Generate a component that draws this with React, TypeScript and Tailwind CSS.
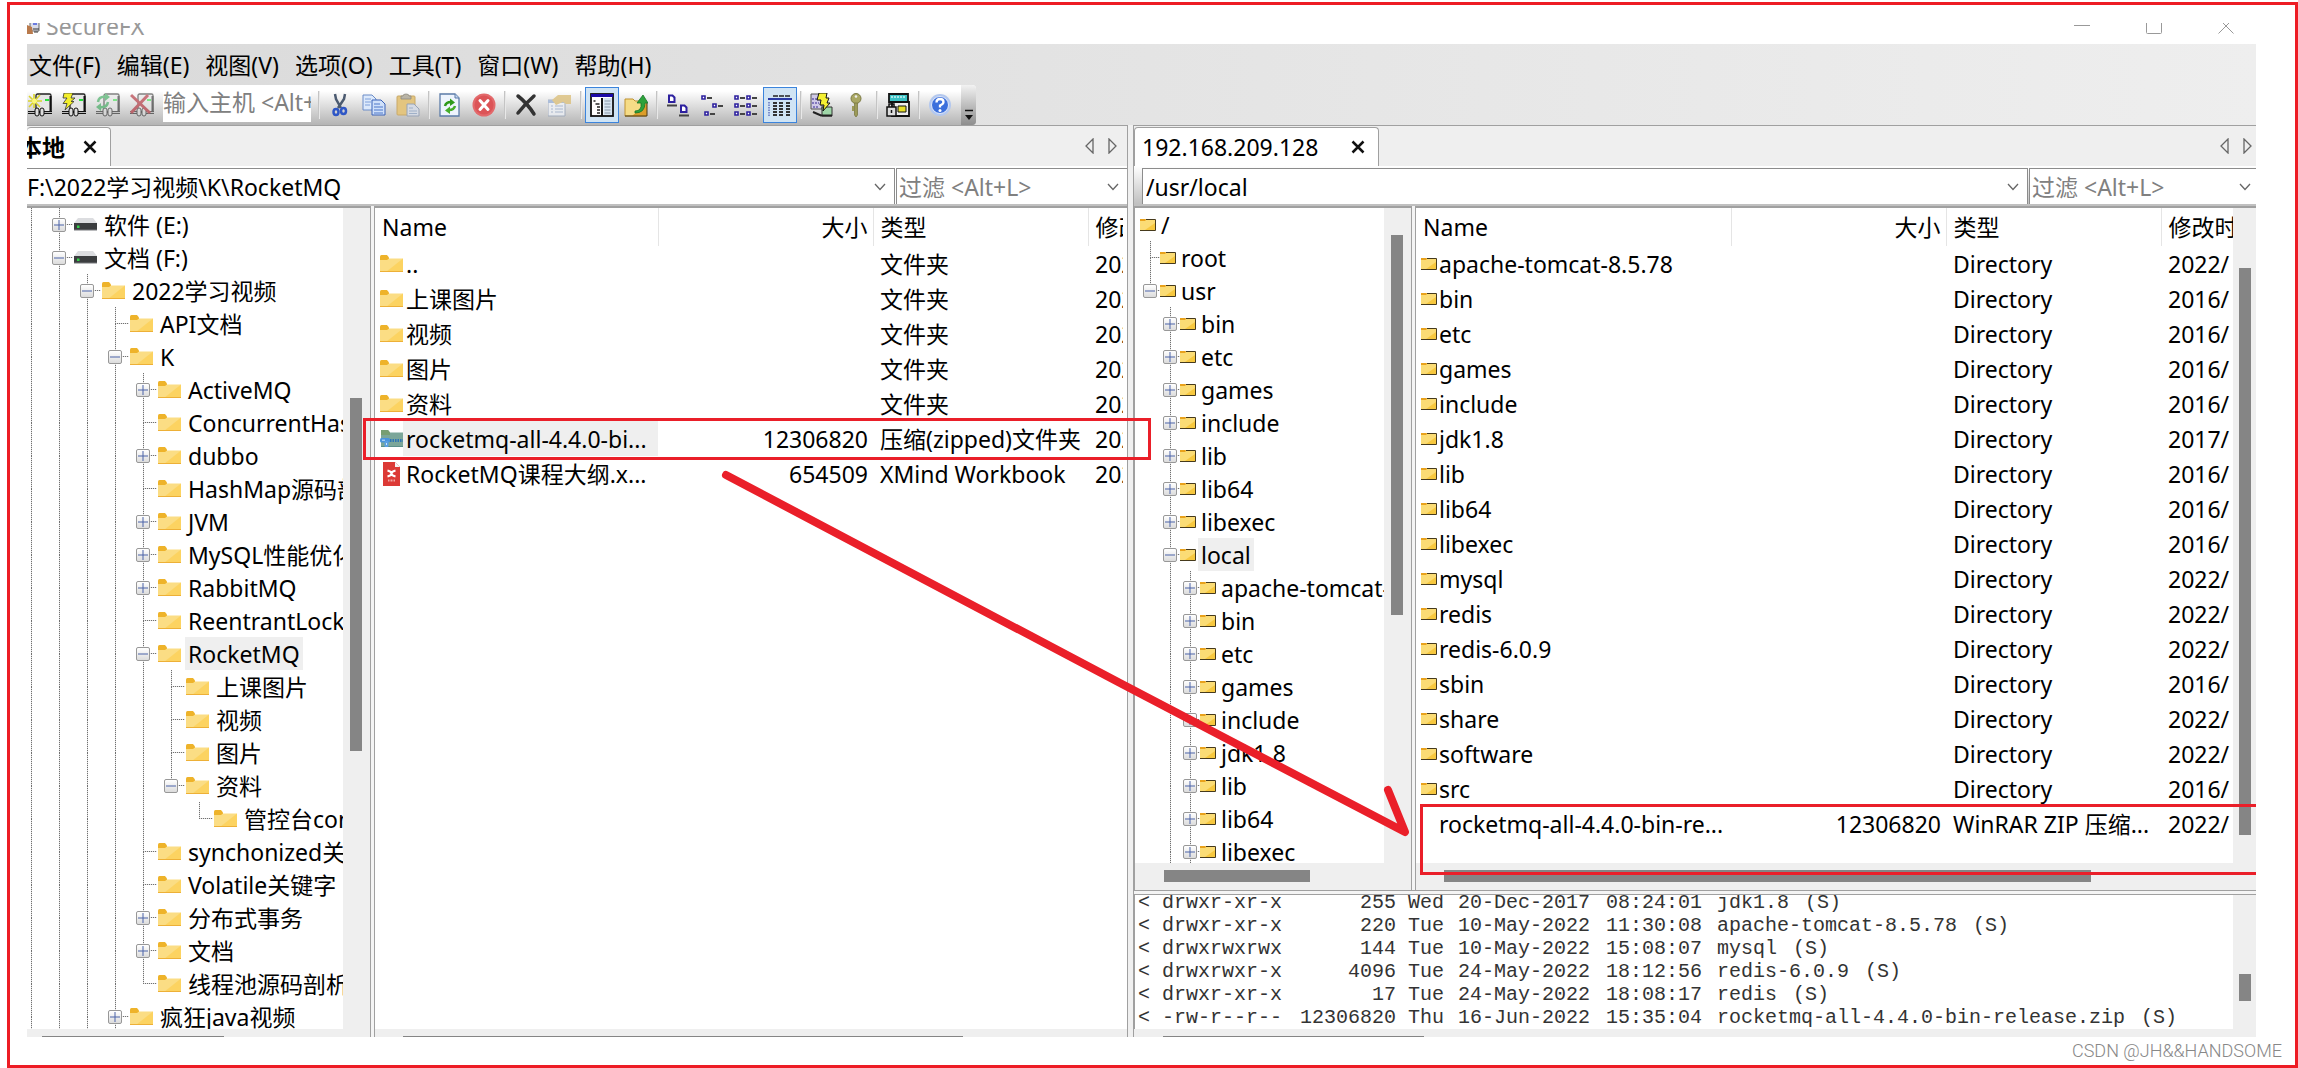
import type { ReactNode } from 'react';
import clsx from 'clsx';

type NodeKind = 'drive' | 'folder' | 'remote';

interface TreeRow {
  label: string;
  // one character per indent level: '|' guide, ' ' blank,
  // '+' closed, '-' open, 't' tee, 'l' last leaf, 'c' open and last
  guides: string;
  kind: NodeKind;
  selected?: boolean;
}

interface FileRow {
  name: string;
  size?: string;
  type: string;
  date: string;
  icon?: ReactNode;
  selected?: boolean;
}

const MENUS = ['文件(F)', '编辑(E)', '视图(V)', '选项(O)', '工具(T)', '窗口(W)', '帮助(H)'];

const LOCAL_TREE: TreeRow[] = [
  { label: '软件 (E:)', guides: '|+', kind: 'drive' },
  { label: '文档 (F:)', guides: '|-', kind: 'drive' },
  { label: '2022学习视频', guides: '||-', kind: 'folder' },
  { label: 'API文档', guides: '|||t', kind: 'folder' },
  { label: 'K', guides: '|||-', kind: 'folder' },
  { label: 'ActiveMQ', guides: '||||+', kind: 'folder' },
  { label: 'ConcurrentHashMap', guides: '||||t', kind: 'folder' },
  { label: 'dubbo', guides: '||||+', kind: 'folder' },
  { label: 'HashMap源码剖析', guides: '||||t', kind: 'folder' },
  { label: 'JVM', guides: '||||+', kind: 'folder' },
  { label: 'MySQL性能优化', guides: '||||+', kind: 'folder' },
  { label: 'RabbitMQ', guides: '||||+', kind: 'folder' },
  { label: 'ReentrantLock', guides: '||||t', kind: 'folder' },
  { label: 'RocketMQ', guides: '||||-', kind: 'folder', selected: true },
  { label: '上课图片', guides: '|||||t', kind: 'folder' },
  { label: '视频', guides: '|||||t', kind: 'folder' },
  { label: '图片', guides: '|||||t', kind: 'folder' },
  { label: '资料', guides: '|||||c', kind: 'folder' },
  { label: '管控台console', guides: '||||| l', kind: 'folder' },
  { label: 'synchonized关键字', guides: '||||t', kind: 'folder' },
  { label: 'Volatile关键字', guides: '||||t', kind: 'folder' },
  { label: '分布式事务', guides: '||||+', kind: 'folder' },
  { label: '文档', guides: '||||+', kind: 'folder' },
  { label: '线程池源码剖析', guides: '||||l', kind: 'folder' },
  { label: '疯狂java视频', guides: '|||+', kind: 'folder' },
];

const REMOTE_TREE: TreeRow[] = [
  { label: '/', guides: '', kind: 'remote' },
  { label: 'root', guides: 't', kind: 'remote' },
  { label: 'usr', guides: 'c', kind: 'remote' },
  { label: 'bin', guides: ' +', kind: 'remote' },
  { label: 'etc', guides: ' +', kind: 'remote' },
  { label: 'games', guides: ' +', kind: 'remote' },
  { label: 'include', guides: ' +', kind: 'remote' },
  { label: 'lib', guides: ' +', kind: 'remote' },
  { label: 'lib64', guides: ' +', kind: 'remote' },
  { label: 'libexec', guides: ' +', kind: 'remote' },
  { label: 'local', guides: ' -', kind: 'remote', selected: true },
  { label: 'apache-tomcat-8.5.78', guides: ' |+', kind: 'remote' },
  { label: 'bin', guides: ' |+', kind: 'remote' },
  { label: 'etc', guides: ' |+', kind: 'remote' },
  { label: 'games', guides: ' |+', kind: 'remote' },
  { label: 'include', guides: ' |+', kind: 'remote' },
  { label: 'jdk1.8', guides: ' |+', kind: 'remote' },
  { label: 'lib', guides: ' |+', kind: 'remote' },
  { label: 'lib64', guides: ' |+', kind: 'remote' },
  { label: 'libexec', guides: ' |+', kind: 'remote' },
];

const LOCAL_FILES: FileRow[] = [
  { name: '..', type: '文件夹', date: '2022/6/16' },
  { name: '上课图片', type: '文件夹', date: '2022/6/16' },
  { name: '视频', type: '文件夹', date: '2022/6/16' },
  { name: '图片', type: '文件夹', date: '2022/6/16' },
  { name: '资料', type: '文件夹', date: '2022/6/16' },
  {
    name: 'rocketmq-all-4.4.0-bi...',
    size: '12306820',
    type: '压缩(zipped)文件夹',
    date: '2022/6/16',
    icon: <ZipIcon />,
    selected: true,
  },
  { name: 'RocketMQ课程大纲.x...', size: '654509', type: 'XMind Workbook', date: '2022/6/16', icon: <XmindIcon /> },
];

const REMOTE_FILES: FileRow[] = [
  { name: 'apache-tomcat-8.5.78', type: 'Directory', date: '2022/' },
  { name: 'bin', type: 'Directory', date: '2016/' },
  { name: 'etc', type: 'Directory', date: '2016/' },
  { name: 'games', type: 'Directory', date: '2016/' },
  { name: 'include', type: 'Directory', date: '2016/' },
  { name: 'jdk1.8', type: 'Directory', date: '2017/' },
  { name: 'lib', type: 'Directory', date: '2016/' },
  { name: 'lib64', type: 'Directory', date: '2016/' },
  { name: 'libexec', type: 'Directory', date: '2016/' },
  { name: 'mysql', type: 'Directory', date: '2022/' },
  { name: 'redis', type: 'Directory', date: '2022/' },
  { name: 'redis-6.0.9', type: 'Directory', date: '2022/' },
  { name: 'sbin', type: 'Directory', date: '2016/' },
  { name: 'share', type: 'Directory', date: '2022/' },
  { name: 'software', type: 'Directory', date: '2022/' },
  { name: 'src', type: 'Directory', date: '2016/' },
  { name: 'rocketmq-all-4.4.0-bin-re...', size: '12306820', type: 'WinRAR ZIP 压缩...', date: '2022/', icon: <span className="w-4" /> },
];

const LOG = [
  ['drwxr-xr-x', '255', 'Wed', '20-Dec-2017', '08:24:01', 'jdk1.8', '(S)'],
  ['drwxr-xr-x', '220', 'Tue', '10-May-2022', '11:30:08', 'apache-tomcat-8.5.78', '(S)'],
  ['drwxrwxrwx', '144', 'Tue', '10-May-2022', '15:08:07', 'mysql', '(S)'],
  ['drwxrwxr-x', '4096', 'Tue', '24-May-2022', '18:12:56', 'redis-6.0.9', '(S)'],
  ['drwxr-xr-x', '17', 'Tue', '24-May-2022', '18:08:17', 'redis', '(S)'],
  ['-rw-r--r--', '12306820', 'Thu', '16-Jun-2022', '15:35:04', 'rocketmq-all-4.4.0-bin-release.zip', '(S)'],
];

/* ---------- small icons ---------- */

function FolderIcon() {
  return (
    <svg viewBox="0 0 23 18" className="h-[18px] w-[23px] shrink-0">
      <path d="M0 1.5Q0 0 1.5 0H7l2 2.5V6H0z" fill="#eeb32a" />
      <path d="M0 5h7l2-1.5h14V17H0z" fill="#fbdd84" />
      <path d="M23 3.5V17H6z" fill="#fccf52" opacity=".7" />
      <path d="M0 16.5h23" stroke="#edb037" />
    </svg>
  );
}

function RemoteFolderIcon() {
  return (
    <svg viewBox="0 0 16 13" className="h-[13px] w-4 shrink-0">
      <path d="M0 1h5.500l1 1.500V4H0z" fill="#e9a21c" />
      <path d="M0 3h5l1-1h9v10H0z" fill="#fbdc75" />
      <path d="M15 5v7H5z" fill="#f7c83f" />
      <path d="M6 1.500h9.500V12.500H0" fill="none" stroke="#463a1c" />
    </svg>
  );
}

function DriveIcon() {
  return (
    <svg viewBox="0 0 23 13" className="h-[13px] w-[23px] shrink-0">
      <path d="M4 0h15l4 5H0z" fill="#dcdde0" />
      <path d="M0 5h23v7H0z" fill="#3b3d3f" />
      <path d="M0 12h23" stroke="#77797c" />
      <path d="M3 7.500h2.500V10H3z" fill="#35d04a" />
    </svg>
  );
}

function ZipIcon() {
  return (
    <svg viewBox="0 0 23 18" className="h-[18px] w-[23px] shrink-0">
      <path d="M1 0h7l2 2.500h13V17H1z" fill="#7ba699" />
      <path d="M1 0h7l2 2.500V5H1z" fill="#779e73" />
      <path d="M10 10.500h13" stroke="#2f74b5" strokeWidth="3" strokeDasharray="1.500 1" />
      <path d="M1 16.500h22" stroke="#5b8f8a" />
      <rect x="0" y="8" width="10" height="4.500" rx="1.500" fill="#4a94dd" />
      <rect x="4.500" y="11" width="4" height="6" rx="1" fill="#5aa0e4" />
      <path d="M2 10.200h3M6.500 13v2" stroke="#cfe6fb" />
    </svg>
  );
}

function XmindIcon() {
  return (
    <svg viewBox="0 0 23 24" className="h-6 w-[23px] shrink-0">
      <path d="M3 0h12l5 5v19H3z" fill="#dc3a36" />
      <path d="M15 0l5 5h-5z" fill="#f4f4f4" />
      <path d="M7.500 8.500q4 1 4 3t4 3M15.500 8.500q-4 1-4 3t-4 3" fill="none" stroke="#fff" strokeWidth="2" />
      <path d="M8 18.500h7" stroke="#f0a7a4" strokeWidth="2" strokeDasharray="1 .5" />
    </svg>
  );
}

function CloseMark() {
  return (
    <svg viewBox="0 0 14 14" className="size-[14px]">
      <path d="M1.500 1.500l11 11M12.500 1.500l-11 11" stroke="#111" strokeWidth="2.500" />
    </svg>
  );
}

function Chevron() {
  return (
    <svg viewBox="0 0 12 8" className="h-2 w-3">
      <path d="M1 1l5 5.500L11 1" fill="none" stroke="#666" strokeWidth="1.300" />
    </svg>
  );
}

/* ---------- toolbar icons ---------- */

function Server({ children, faded }: { children: ReactNode; faded?: boolean }) {
  return (
    <svg viewBox="0 0 24 24" className={clsx('size-6', faded && 'opacity-55')}>
      <rect x="8" y="1" width="15" height="18" rx="1.500" fill="#e6e6e6" stroke="#222" strokeWidth="1.300" />
      <path d="M22.500 3v16H10" fill="none" stroke="#111" strokeWidth="2" />
      <path d="M17 7h4" stroke="#27e23c" strokeWidth="2" />
      <path d="M0 19.500h7M16 19.500h8" stroke="#111" strokeWidth="3" />
      <path d="M0 19.500h7M16 19.500h8" stroke="#bbb" strokeWidth="1" />
      <rect x="7" y="15" width="4" height="8" rx="2" fill="#ddd" stroke="#111" />
      <rect x="12" y="15" width="4" height="8" rx="2" fill="#ddd" stroke="#111" />
      {children}
    </svg>
  );
}

const NewSessionIcon = () => (
  <Server>
    <path d="M6 1v14M0 8h14M1 3l11 11M12 2L1 14" stroke="#d9d32b" strokeWidth="1.600" />
    <circle cx="6.500" cy="8" r="2.500" fill="#fbf87a" />
  </Server>
);

const QuickConnectIcon = () => (
  <Server>
    <path d="M2 0h9L9 5h4l-4 3.500h3L3 17l2-6.500H1L5 5H1z" fill="#f3ef2c" stroke="#333" strokeWidth=".8" />
  </Server>
);

const ReconnectIcon = () => (
  <Server faded>
    <path d="M2 9q1-6 8-5M12 9q-1 6-8 5" fill="none" stroke="#21a046" strokeWidth="2.500" />
    <path d="M9 0l5 4-5 4zM5 10l-5 4 5 4z" fill="#21a046" />
  </Server>
);

const DisconnectIcon = () => (
  <Server faded>
    <path d="M1 2l19 18M18 2L1 20" stroke="#a8101c" strokeWidth="3" />
  </Server>
);

const CutIcon = () => (
  <svg viewBox="0 0 24 24" className="size-6">
    <path d="M7 1l1 5 5 9M17 1l-1 5-6 9" fill="none" stroke="#4b5a70" strokeWidth="2.500" />
    <ellipse cx="8" cy="19" rx="2.500" ry="3" fill="none" stroke="#2f57c6" strokeWidth="2.500" />
    <ellipse cx="15.500" cy="18" rx="2.500" ry="3" fill="none" stroke="#2f57c6" strokeWidth="2.500" />
  </svg>
);

const CopyIcon = () => (
  <svg viewBox="0 0 24 24" className="size-6">
    <path d="M1 2h9l4 4v11H1z" fill="#dce9fb" stroke="#6a8cc8" />
    <path d="M3 6h6M3 9h6M3 12h5" stroke="#7fa0da" />
    <path d="M10 7h9l4 4v11H10z" fill="#cfe0fa" stroke="#3a63b8" />
    <path d="M12 11h6M12 14h9M12 17h9M12 20h9" stroke="#4c77c8" />
  </svg>
);

const PasteIcon = () => (
  <svg viewBox="0 0 24 24" className="size-6">
    <rect x="1" y="3" width="18" height="19" rx="1" fill="#e3c580" stroke="#c9a968" />
    <path d="M5 6V3h2q0-2 3-2t3 2h2v3z" fill="#b9b4a6" stroke="#8d8a80" strokeWidth=".8" />
    <path d="M11 11h7l5 5v7H11z" fill="#d5dae3" stroke="#98a3b5" />
    <path d="M13 15h4M13 18h8M13 20.500h8" stroke="#9fb0c8" />
  </svg>
);

const RefreshIcon = () => (
  <svg viewBox="0 0 24 24" className="size-6">
    <path d="M2 1h15l4 4v18H2z" fill="#eef4fd" stroke="#5b7ba8" strokeWidth="1.300" />
    <path d="M17 1v4h4" fill="#c7d8ef" stroke="#5b7ba8" />
    <path d="M7 13q1-4 6-4" fill="none" stroke="#2f9a1b" strokeWidth="2.500" />
    <path d="M12 5.500l5 4-5 3.500z" fill="#2f9a1b" />
    <path d="M17 13q-1 4-6 4" fill="none" stroke="#46ad2a" strokeWidth="2.500" />
    <path d="M12 13.500l-5 4 5 3.500z" fill="#46ad2a" />
  </svg>
);

const StopIcon = () => (
  <svg viewBox="0 0 24 24" className="size-6">
    <circle cx="12" cy="12" r="11.500" fill="#e3696b" />
    <circle cx="12" cy="12" r="9.500" fill="#dc5457" />
    <path d="M8 7.500l8 9M16 7.500l-8 9" stroke="#fff" strokeWidth="3" strokeLinecap="round" />
  </svg>
);

const DeleteIcon = () => (
  <svg viewBox="0 0 24 24" className="size-6">
    <path d="M4 3q9 7 16 18M20 3Q11 11 4 20" fill="none" stroke="#333" strokeWidth="3.500" strokeLinecap="round" />
  </svg>
);

const PropertiesIcon = () => (
  <svg viewBox="0 0 24 24" className="size-6 opacity-80">
    <path d="M0 7h17v16H0z" fill="#eef1f6" stroke="#98a4b8" />
    <path d="M0 8.500h17" stroke="#9db3d6" strokeWidth="3" />
    <path d="M3 13h2M3 16h2M3 19h2M7 13h8M7 16h8M7 19h8" stroke="#9fb0cb" />
    <path d="M4 7l6-5h13v9h-5l-3-2-7 3z" fill="#dcc07c" />
  </svg>
);

const PanesIcon = () => (
  <svg viewBox="0 0 24 24" className="size-6">
    <rect x="1" y="1" width="22" height="22" fill="#fff" stroke="#111" strokeWidth="1.800" />
    <path d="M1 2.500h22" stroke="#1b0aa8" strokeWidth="3" />
    <path d="M12 5v18" stroke="#111" strokeWidth="2" />
    <path d="M13.500 5H22v17h-8.500z" fill="#d6e4f0" />
    <path d="M14.500 8h6M14.500 11h6M14.500 14h6M14.500 17h6M14.500 20h6" stroke="#8a98a8" />
    <path d="M3.500 8h2M5.500 11h4M7 14h3M7 17h3M7 20h3" stroke="#222" strokeWidth="1.300" />
  </svg>
);

const UpFolderIcon = () => (
  <svg viewBox="0 0 24 24" className="size-6">
    <path d="M1 6h8l2 2h11v15H1z" fill="#f6dc86" stroke="#bf9231" />
    <path d="M23 10v13H8z" fill="#dc9e2a" />
    <path d="M23 10v13H1" fill="none" stroke="#4a3913" />
    <path d="M11 18q7 0 6-8h-4l6-8 5 8h-3q0 10-10 10z" fill="#2da23b" stroke="#187527" strokeWidth=".8" />
  </svg>
);

const LargeIconsIcon = () => (
  <svg viewBox="0 0 24 24" className="size-6">
    <path d="M3 2.500h3.500l2 2V9H3zM15 12.500h3.500l2 2V19H15z" fill="#fff" stroke="#2d209f" strokeWidth="2" />
    <path d="M1 12.500h10M13 22.500h10" stroke="#444" strokeWidth="2" />
  </svg>
);

const SmallIconsIcon = () => (
  <svg viewBox="0 0 24 24" className="size-6">
    <path d="M2 3h3v3H2zM13 11h3v3h-3zM5 19h3v3H5z" fill="#fff" stroke="#2d209f" strokeWidth="1.600" />
    <path d="M7 5h5M18 13h5M10 21h5" stroke="#444" strokeWidth="2" />
  </svg>
);

const ListIcon = () => (
  <svg viewBox="0 0 24 24" className="size-6">
    <path d="M1 3h3v3H1zM1 11h3v3H1zM1 19h3v3H1zM13 3h3v3h-3zM13 11h3v3h-3zM13 19h3v3h-3z" fill="#fff" stroke="#2d209f" strokeWidth="1.600" />
    <path d="M6 5h5M6 13h5M6 21h5M18 5h5M18 13h5M18 21h5" stroke="#444" strokeWidth="2" />
  </svg>
);

const DetailsIcon = () => (
  <svg viewBox="0 0 24 24" className="size-6">
    <path d="M5 3h18" stroke="#222" strokeWidth="1.500" strokeDasharray="5 1" />
    <path d="M0 6h24" stroke="#2a3aa5" strokeWidth="2" />
    <path d="M1 9v15" stroke="#2a3aa5" strokeDasharray="1.500 1" />
    <path d="M7 9v15M13 9v15M20 9v15" stroke="#333" strokeWidth="4" strokeDasharray="2 1" />
  </svg>
);

const TransferIcon = () => (
  <svg viewBox="0 0 24 24" className="size-6">
    <path d="M1 1h11v15H1z" fill="#cfc9e6" stroke="#555" />
    <path d="M2 6h7M2 10h7M3 14h6" stroke="#6a5cb0" strokeWidth="1.500" strokeDasharray="2 1" />
    <path d="M12 14h10v9H12z" fill="#9fd6a8" stroke="#333" />
    <path d="M3 19l8 3.500h11" fill="none" stroke="#222" strokeWidth="2" />
    <path d="M9 0h8l-1 5h3l-2 5h3l-7 8 1-6h-4l1-5H7z" fill="#f4f032" stroke="#111" />
  </svg>
);

const KeyIcon = () => (
  <svg viewBox="0 0 24 24" className="size-6">
    <circle cx="12" cy="5.500" r="5" fill="#a9a763" stroke="#7b7a45" />
    <circle cx="12" cy="3.500" r="1.300" fill="#eee" />
    <path d="M10.500 10h3v12l-1.500 2-1.500-2z" fill="#9c9a58" stroke="#7b7a45" strokeWidth=".8" />
    <path d="M10 13H8v5h2" fill="#9c9a58" />
  </svg>
);

const LogIcon = () => (
  <svg viewBox="0 0 24 24" className="size-6">
    <path d="M3 1h19v8H3z" fill="#3cc3c6" stroke="#111" strokeWidth="1.800" />
    <path d="M5 4h15" stroke="#cdf3f3" strokeWidth="1.500" strokeDasharray="2 1" />
    <path d="M6 9h17v14H6z" fill="#eee" stroke="#111" strokeWidth="1.800" />
    <path d="M12 13h8v6h-8z" fill="#e7e02b" stroke="#111" />
    <rect x="1" y="14" width="9" height="9" fill="#ddd" stroke="#111" strokeWidth="1.500" />
    <path d="M3 14v-3h5v3M5.500 17v3" fill="none" stroke="#111" strokeWidth="1.500" />
  </svg>
);

const HelpIcon = () => (
  <svg viewBox="0 0 24 24" className="size-6">
    <circle cx="12" cy="12" r="11" fill="#b4c8ee" />
    <circle cx="12" cy="12" r="8.500" fill="#3b6fdc" stroke="#dfe8fa" />
    <path d="M8.500 9.500q0-3.500 3.500-3.500t3.500 3q0 2-3.500 3.500v2" fill="none" stroke="#fff" strokeWidth="2.300" />
    <circle cx="12" cy="17.500" r="1.500" fill="#fff" />
  </svg>
);

function ToolButton({ label, pressed, children }: { label: string; pressed?: boolean; children: ReactNode }) {
  return (
    <button
      aria-label={label}
      className={clsx(
        'flex h-9 w-[34px] shrink-0 items-center justify-center border',
        pressed ? 'border-[#3b84dc] bg-[#d0e4f4]' : 'border-transparent'
      )}
    >
      {children}
    </button>
  );
}

function Separator() {
  return <span className="mx-[3px] h-7 w-0.5 shrink-0 border-l border-[#c4c4c4] bg-[#e8e8e8]" />;
}

function Toolbar() {
  return (
    <div className="flex h-10 w-[949px] items-center overflow-hidden rounded-r bg-linear-to-b from-white from-15% to-[#b4b4b4]">
      <div className="-ml-1 flex">
        <ToolButton label="新建"><NewSessionIcon /></ToolButton>
        <ToolButton label="快速连接"><QuickConnectIcon /></ToolButton>
        <ToolButton label="重新连接"><ReconnectIcon /></ToolButton>
        <ToolButton label="断开"><DisconnectIcon /></ToolButton>
      </div>
      <input
        aria-label="主机"
        placeholder="输入主机 <Alt+R>"
        className="mr-1 ml-1 h-[37px] w-[148px] shrink-0 self-start bg-white pb-1 text-[23px] outline-none placeholder:text-[#808080]"
      />
      <Separator />
      <ToolButton label="剪切"><CutIcon /></ToolButton>
      <ToolButton label="复制"><CopyIcon /></ToolButton>
      <ToolButton label="粘贴"><PasteIcon /></ToolButton>
      <Separator />
      <ToolButton label="刷新"><RefreshIcon /></ToolButton>
      <ToolButton label="停止"><StopIcon /></ToolButton>
      <Separator />
      <ToolButton label="删除"><DeleteIcon /></ToolButton>
      <ToolButton label="属性"><PropertiesIcon /></ToolButton>
      <Separator />
      <ToolButton label="树视图" pressed><PanesIcon /></ToolButton>
      <ToolButton label="向上"><UpFolderIcon /></ToolButton>
      <Separator />
      <ToolButton label="大图标"><LargeIconsIcon /></ToolButton>
      <ToolButton label="小图标"><SmallIconsIcon /></ToolButton>
      <ToolButton label="列表"><ListIcon /></ToolButton>
      <ToolButton label="详细信息" pressed><DetailsIcon /></ToolButton>
      <Separator />
      <ToolButton label="传输"><TransferIcon /></ToolButton>
      <ToolButton label="密钥"><KeyIcon /></ToolButton>
      <Separator />
      <ToolButton label="日志"><LogIcon /></ToolButton>
      <Separator />
      <ToolButton label="帮助"><HelpIcon /></ToolButton>
      <button
        aria-label="更多"
        className="ml-1 flex h-full flex-1 items-end justify-center bg-linear-to-b from-[#f2f2f2] to-[#8e8e8e] pb-1"
      >
        <svg viewBox="0 0 10 12" className="h-3 w-[10px]">
          <path d="M1 1.500h8" stroke="#111" strokeWidth="1.500" />
          <path d="M1 6h8l-4 5z" fill="#111" />
        </svg>
      </button>
    </div>
  );
}

/* ---------- panes ---------- */

const DOTS_Y = 'w-px bg-[repeating-linear-gradient(to_bottom,#707070_0px_1px,#e2e2e2_1px_2px)]';
const DOTS_X = 'w-full bg-[repeating-linear-gradient(to_right,#707070_0px_1px,#e2e2e2_1px_2px)]';

function Guide({ mark, narrow }: { mark: string; narrow?: boolean }) {
  const boxed = mark === '+' || mark === '-' || mark === 'c';
  const joined = boxed || mark === 't' || mark === 'l';
  const continues = mark === '|' || mark === '+' || mark === '-' || mark === 't';
  return (
    <span className={clsx('relative flex h-full shrink-0', narrow ? 'w-5' : 'w-7')}>
      <span className="w-1/2" />
      <span className="flex w-1/2 flex-col">
        <span className={clsx('h-4', mark !== ' ' && DOTS_Y)} />
        <span className={clsx('h-px', joined ? DOTS_X : continues && DOTS_Y)} />
        <span className={clsx('h-4', continues && DOTS_Y)} />
      </span>
      {boxed && (
        <button
          aria-label={mark === '+' ? '展开' : '折叠'}
          className="absolute top-1/2 left-1/2 flex size-[14px] -translate-1/2 items-center justify-center rounded-xs border border-[#989898] bg-linear-to-b from-white to-[#dcdcdc]"
        >
          <svg viewBox="0 0 10 10" className="size-[10px]">
            <path d={mark === '+' ? 'M0 5h10M5 0v10' : 'M0 5h10'} stroke="#4b63a7" />
          </svg>
        </button>
      )}
    </span>
  );
}

function Tree({ rows, remote }: { rows: TreeRow[]; remote?: boolean }) {
  return (
    <ul className={clsx('min-w-0 flex-1 overflow-hidden bg-white', !remote && '-ml-[10px]')}>
      {rows.map((row, i) => (
        <li key={i} className="flex h-[33px] items-center whitespace-nowrap">
          {row.guides.split('').map((mark, j) => (
            <Guide key={j} mark={mark} narrow={remote} />
          ))}
          {!remote && <span className="w-px shrink-0" />}
          {row.kind === 'drive' && <DriveIcon />}
          {row.kind === 'folder' && <FolderIcon />}
          {row.kind === 'remote' && <RemoteFolderIcon />}
          <span
            className={clsx(
              'flex h-full items-center px-[3px]',
              remote ? 'ml-0.5' : 'ml-1',
              row.selected && 'bg-[#efefef]'
            )}
          >
            {row.label}
          </span>
        </li>
      ))}
    </ul>
  );
}

function FileTable({ files, remote }: { files: FileRow[]; remote?: boolean }) {
  return (
    <div className={clsx('min-w-0 flex-1 overflow-hidden bg-white', !remote && 'pr-1')}>
      <table className="w-full table-fixed border-collapse whitespace-nowrap">
        <thead>
          <tr className="h-[38px] text-left">
            <th className={clsx('border-r border-[#e5e5e5] pl-[7px] font-normal', remote ? 'w-[315px]' : 'w-[283px]')}>Name</th>
            <th className="w-[215px] border-r border-[#e5e5e5] pr-[5px] text-right font-normal">大小</th>
            <th className="w-[215px] border-r border-[#e5e5e5] pl-[7px] font-normal">类型</th>
            <th className="overflow-hidden pl-[7px] font-normal">修改时间</th>
          </tr>
        </thead>
        <tbody>
          {files.map((file) => (
            <tr key={file.name} className="h-[35px]">
              <td className="pl-[5px]">
                <div className="flex h-[35px] items-center">
                  {file.icon ?? (remote ? <RemoteFolderIcon /> : <FolderIcon />)}
                  <span className={clsx('flex h-full flex-1 items-center', remote ? 'pl-0.5' : 'pl-[3px]', file.selected && 'bg-[#efefef]')}>
                    {file.name}
                  </span>
                </div>
              </td>
              <td className="pr-[5px] text-right">{file.size}</td>
              <td className="pl-[7px]">{file.type}</td>
              <td className="overflow-hidden pl-[7px]">{file.date}</td>
            </tr>
          ))}
        </tbody>
      </table>
    </div>
  );
}

function VScroll({ thumb, wide }: { thumb: string; wide?: boolean }) {
  return (
    <div className={clsx('flex shrink-0 bg-[#efefef]', wide ? 'w-[27px] pl-[7px]' : 'w-[23px] pl-[6px]')}>
      <div className={clsx('w-3 bg-[#858585]', thumb)} />
    </div>
  );
}

function HScroll({ thumb, cut }: { thumb: string; cut?: boolean }) {
  return (
    <div className={clsx('shrink-0 overflow-hidden bg-[#efefef] pt-[7px]', cut ? 'h-2' : 'h-[27px]')}>
      <div className={clsx('h-3 bg-[#858585]', thumb)} />
    </div>
  );
}

function TabStrip({ title, local }: { title: string; local?: boolean }) {
  return (
    <div className="flex h-10 shrink-0 items-end justify-between bg-[#efefef]">
      <div
        className={clsx(
          'flex h-[39px] items-center justify-between rounded-t border-t border-r border-[#a0a0a0] bg-white',
          local ? 'w-[84px] pr-[13px] font-bold' : 'w-[245px] border-l pr-[13px] pl-[7px]'
        )}
      >
        <span className={local ? '-ml-2' : ''}>{title}</span>
        <button aria-label="关闭标签"><CloseMark /></button>
      </div>
      <div className={clsx('flex h-full items-center gap-[14px]', local ? 'pr-[10px]' : 'pr-1')}>
        <button aria-label="向左">
          <svg viewBox="0 0 9 16" className="h-4 w-[9px]">
            <path d="M8 1v14L1 8z" fill="none" stroke="#666" strokeWidth="1.300" />
          </svg>
        </button>
        <button aria-label="向右">
          <svg viewBox="0 0 9 16" className="h-4 w-[9px]">
            <path d="M1 1v14l7-7z" fill="none" stroke="#666" strokeWidth="1.300" />
          </svg>
        </button>
      </div>
    </div>
  );
}

function AddressBar({ path, remote }: { path: string; remote?: boolean }) {
  return (
    <div className={clsx('flex h-10 shrink-0 gap-px border-b-2 border-[#c0c0c0] pt-0.5', remote ? 'bg-linear-to-b from-white to-[#c0c0c0] pl-2' : 'bg-white')}>
      <div className={clsx('flex min-w-0 flex-1 items-center border-t border-r border-[#8c8c8c] bg-white pt-px pr-2', remote && 'border-l')}>
        <input aria-label="路径" defaultValue={path} className={clsx('min-w-0 flex-1 outline-none', remote && 'pl-[3px]')} />
        <button aria-label="展开路径"><Chevron /></button>
      </div>
      <div className={clsx('flex items-center border-t border-l border-[#8c8c8c] bg-white pt-px pl-0.5', remote ? 'w-[227px] pr-[5px]' : 'w-[231px] pr-2')}>
        <input aria-label="过滤" placeholder="过滤 <Alt+L>" className="min-w-0 flex-1 outline-none placeholder:text-[#808080]" />
        <button aria-label="展开过滤"><Chevron /></button>
      </div>
    </div>
  );
}

function LogPane() {
  return (
    <div className="flex h-[147px] shrink-0 flex-col border-t border-[#a0a0a0] bg-[#f4f4f4] pt-[3px]">
      <div className="flex min-h-0 flex-1 border-t border-l border-[#a0a0a0]">
        <div className="min-w-0 flex-1 overflow-hidden bg-white pl-[3px]">
          <div className="-mt-1 font-['Liberation_Mono',monospace] text-[20px] leading-[23px] text-[#333]">
            {LOG.map(([mode, size, day, date, time, name, flag]) => (
              <div key={name} className="flex whitespace-pre">
                <span className="w-6">&lt;</span>
                <span className="w-[123px]">{mode}</span>
                <span className="w-[111px] text-right">{size}</span>
                <span className="ml-3 w-[50px]">{day}</span>
                <span className="w-[148px]">{date}</span>
                <span className="w-[111px]">{time}</span>
                <span>{name}</span>
                <span className="ml-4">{flag}</span>
              </div>
            ))}
          </div>
        </div>
        <VScroll thumb="mt-[79px] h-[27px]" />
      </div>
      <HScroll thumb="ml-[29px] w-[261px]" cut />
    </div>
  );
}

function LocalPanel() {
  return (
    <section className="flex min-w-0 flex-col overflow-hidden border-t border-r border-[#a0a0a0]">
      <TabStrip title="本地" local />
      <AddressBar path="F:\2022学习视频\K\RocketMQ" />
      <div className="flex min-h-0 flex-1 gap-[3px] bg-[#f4f4f4]">
        <div className="flex w-[344px] shrink-0 flex-col border-t-2 border-r border-[#a0a0a0]">
          <div className="flex min-h-0 flex-1 overflow-hidden">
            <Tree rows={LOCAL_TREE} />
            <VScroll thumb="mt-[190px] h-[353px]" wide />
          </div>
          <HScroll thumb="ml-[15px] w-[182px]" cut />
        </div>
        <div className="flex min-w-0 flex-1 flex-col border-t-2 border-l border-[#a0a0a0]">
          <div className="flex min-h-0 flex-1">
            <FileTable files={LOCAL_FILES} />
          </div>
          <HScroll thumb="ml-[28px] w-[560px]" cut />
        </div>
      </div>
    </section>
  );
}

function RemotePanel() {
  return (
    <section className="flex min-w-0 flex-col overflow-hidden border-t border-l border-[#a0a0a0]">
      <TabStrip title="192.168.209.128" />
      <AddressBar path="/usr/local" remote />
      <div className="flex min-h-0 flex-1 gap-[3px] bg-[#f4f4f4]">
        <div className="flex w-[278px] shrink-0 flex-col border-t-2 border-r border-l border-[#a0a0a0]">
          <div className="flex min-h-0 flex-1 overflow-hidden bg-white pl-[5px]">
            <Tree rows={REMOTE_TREE} remote />
            <VScroll thumb="mt-[27px] h-[380px]" wide />
          </div>
          <HScroll thumb="ml-[29px] w-[146px]" />
        </div>
        <div className="flex min-w-0 flex-1 flex-col border-t-2 border-l border-[#a0a0a0]">
          <div className="flex min-h-0 flex-1 overflow-hidden">
            <FileTable files={REMOTE_FILES} remote />
            <VScroll thumb="mt-[60px] h-[567px]" />
          </div>
          <HScroll thumb="ml-[28px] w-[647px]" />
        </div>
      </div>
      <LogPane />
    </section>
  );
}

function Annotations() {
  return (
    <>
      <div className="pointer-events-none absolute top-[395px] left-[336px] h-[42px] w-[788px] border-3 border-[#ea1f29]" />
      <div className="pointer-events-none absolute top-[781px] -right-2 left-[1393px] h-[71px] border-3 border-[#ea1f29]" />
      <svg viewBox="0 0 700 380" className="pointer-events-none absolute top-[441px] left-[688px] h-[380px] w-[700px]">
        <path
          d="M11 11L405 219L690 368L673 326"
          fill="none"
          stroke="#ea1f29"
          strokeWidth="8"
          strokeLinecap="round"
          strokeLinejoin="round"
        />
      </svg>
    </>
  );
}

export default function App() {
  return (
    <div className="flex h-screen bg-white pt-0.5 pl-[7px] font-['Noto_Sans','Noto_Sans_CJK_SC',sans-serif] text-[23px] leading-7 text-black">
      <div className="flex min-w-0 flex-1 flex-col border-3 border-[#ed1c24] pt-[18px] pl-[17px]">
        <main className="relative mr-[39px] flex min-h-0 flex-1 flex-col overflow-hidden">
          {/* Title bar */}
          <header className="flex h-[21px] shrink-0 items-end justify-between overflow-hidden">
            <div className="flex h-9 items-center gap-1.5">
              <svg viewBox="0 0 13 18" className="h-[18px] w-[13px]">
                <path d="M3 1h9v13H3z" fill="#d9dcea" stroke="#666" />
                <path d="M6 4h4v4H6z" fill="#6a7be0" />
                <path d="M0 8l5 2 1 7H0z" fill="#b97a4c" />
                <path d="M6 12h6M7 15h4" stroke="#333" />
              </svg>
              <h1 className="text-[#999]">SecureFX</h1>
            </div>
            <div className="flex h-9 items-center gap-[56px] pr-[22px]">
              <button aria-label="最小化">
                <svg viewBox="0 0 16 16" className="size-4"><path d="M0 7.500h16" stroke="#999" /></svg>
              </button>
              <button aria-label="最大化">
                <svg viewBox="0 0 16 16" className="size-4"><rect x=".5" y=".5" width="15" height="15" rx="1" fill="none" stroke="#999" /></svg>
              </button>
              <button aria-label="关闭">
                <svg viewBox="0 0 16 16" className="size-4"><path d="M.5 .5l15 15M15.500 .5l-15 15" stroke="#999" /></svg>
              </button>
            </div>
          </header>

          {/* Menu and toolbar */}
          <div className="shrink-0 bg-linear-to-r from-[#dadada] to-[#eeeeee]">
            <nav className="flex h-[41px] items-center gap-4 pl-0.5">
              {MENUS.map((menu) => (
                <button key={menu}>{menu}</button>
              ))}
            </nav>
            <Toolbar />
          </div>

          {/* Local and remote sides */}
          <div className="grid min-h-0 flex-1 grid-cols-[1101fr_1123fr] grid-rows-[minmax(0,1fr)] gap-[5px] bg-[#f0f0f0]">
            <LocalPanel />
            <RemotePanel />
          </div>
          <Annotations />
        </main>
        <footer className="h-7 shrink-0 pr-[13px] text-right font-[Roboto,sans-serif] text-[18px] font-light text-[#888]">
          CSDN @JH&amp;&amp;HANDSOME
        </footer>
      </div>
    </div>
  );
}
